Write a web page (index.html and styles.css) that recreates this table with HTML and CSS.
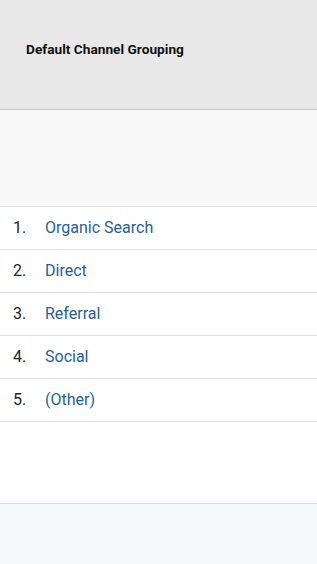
FILE: index.html
```html
<!DOCTYPE html>
<html>
<head>
<meta charset="utf-8">
<link rel="stylesheet" href="styles.css">
</head>
<body>
<div class="table">
  <div class="head">Default Channel Grouping</div>
  <div class="totals"></div>
  <ol class="rows">
    <li class="row"><span class="num">1.</span><a class="name">Organic Search</a></li>
    <li class="row"><span class="num">2.</span><a class="name">Direct</a></li>
    <li class="row"><span class="num">3.</span><a class="name">Referral</a></li>
    <li class="row"><span class="num">4.</span><a class="name">Social</a></li>
    <li class="row"><span class="num">5.</span><a class="name">(Other)</a></li>
  </ol>
  <div class="spacer"></div>
  <div class="footer"></div>
</div>
</body>
</html>
```
FILE: styles.css
```css
html, body {
  margin: 0;
  padding: 0;
  height: 100%;
}
body {
  font-family: Roboto, "Liberation Sans", sans-serif;
  background: #f7f8fa;
}
.table {
  display: flex;
  flex-direction: column;
  min-height: 100%;
}
.head {
  height: 110px;
  box-sizing: border-box;
  background: #e8e8e8;
  border-bottom: 1px solid #c8c8c8;
  padding: 41px 0 0 26px;
  line-height: 17px;
  font-size: 13.7px;
  font-weight: 700;
  color: #111;
}
.totals {
  height: 97px;
  box-sizing: border-box;
  background: #f8f8f8;
  border-bottom: 1px solid #e0e0e0;
}
.rows {
  list-style: none;
  margin: 0;
  padding: 0;
  background: #fff;
}
.row {
  height: 43px;
  box-sizing: border-box;
  border-bottom: 1px solid #e0e0e0;
  padding-bottom: 2px;
  display: flex;
  align-items: center;
  font-size: 16px;
}
.num {
  width: 45px;
  box-sizing: border-box;
  padding-left: 13px;
  color: #222;
}
.name {
  color: #25609e;
}
.spacer {
  height: 82px;
  box-sizing: border-box;
  background: #fff;
  border-bottom: 1px solid #dcdcdc;
}
.footer {
  flex: 1;
  background: #f7f8fa;
}
```
